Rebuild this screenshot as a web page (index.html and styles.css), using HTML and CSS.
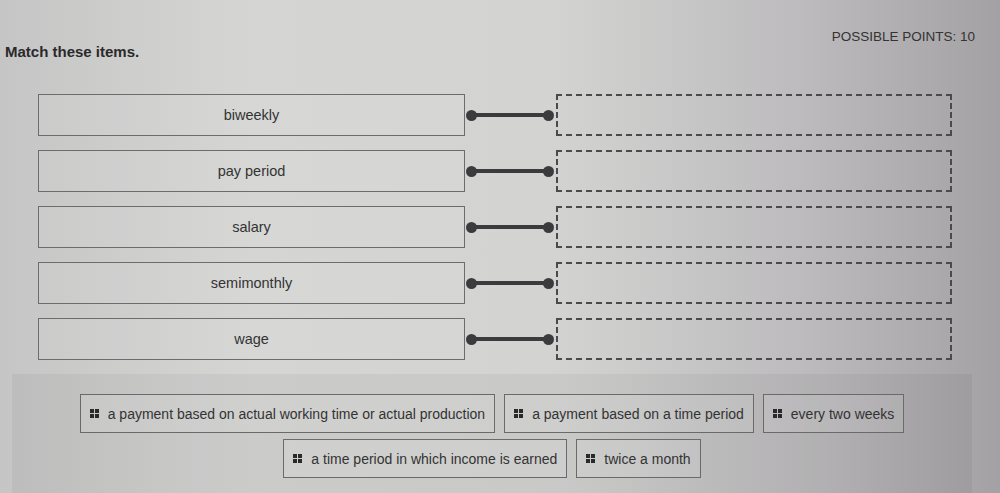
FILE: index.html
```html
<html lang="en">
<head>
  <meta charset="UTF-8">
  <title>Match these items</title>
  <link rel="stylesheet" href="styles.css">
</head>
<body>

  <div class="pergunta">
    <div class="pontos">POSSIBLE POINTS: 10</div>
    <h2 class="titulo">Match these items.</h2>

    <div class="pares">
      <div class="par">
        <div class="termo">biweekly</div>
        <div class="ligacao"><span class="ponto"></span><span class="linha"></span><span class="ponto"></span></div>
        <div class="alvo"></div>
      </div>
      <div class="par">
        <div class="termo">pay period</div>
        <div class="ligacao"><span class="ponto"></span><span class="linha"></span><span class="ponto"></span></div>
        <div class="alvo"></div>
      </div>
      <div class="par">
        <div class="termo">salary</div>
        <div class="ligacao"><span class="ponto"></span><span class="linha"></span><span class="ponto"></span></div>
        <div class="alvo"></div>
      </div>
      <div class="par">
        <div class="termo">semimonthly</div>
        <div class="ligacao"><span class="ponto"></span><span class="linha"></span><span class="ponto"></span></div>
        <div class="alvo"></div>
      </div>
      <div class="par">
        <div class="termo">wage</div>
        <div class="ligacao"><span class="ponto"></span><span class="linha"></span><span class="ponto"></span></div>
        <div class="alvo"></div>
      </div>
    </div>

    <div class="banco">
      <div class="opcao"><span class="alca"><i></i><i></i><i></i><i></i></span>a payment based on actual working time or actual production</div>
      <div class="opcao"><span class="alca"><i></i><i></i><i></i><i></i></span>a payment based on a time period</div>
      <div class="opcao"><span class="alca"><i></i><i></i><i></i><i></i></span>every two weeks</div>
      <div class="opcao"><span class="alca"><i></i><i></i><i></i><i></i></span>a time period in which income is earned</div>
      <div class="opcao"><span class="alca"><i></i><i></i><i></i><i></i></span>twice a month</div>
    </div>
  </div>

</body>
</html>
```

FILE: styles.css
```css
* { box-sizing: border-box; }
body, html {
  margin: 0;
  height: 100%;
  overflow: hidden;
  font-family: "Liberation Sans", Arial, sans-serif;
  color: #2e2e2e;
}

body {
  background: linear-gradient(90deg, #c6c5c5 0%, #d5d6d4 25%, #d3d4d2 55%, #bdbbbd 80%, #a3a1a3 100%);
}

.pergunta {
  height: 100vh;
  display: flex;
  flex-direction: column;
}

.pontos {
  align-self: flex-end;
  margin: 30px 25px 0 0;
  font-size: 13.5px;
  line-height: 14px;
  color: #333;
}

.titulo {
  margin: 0 0 0 5px;
  font-size: 15px;
  line-height: 16px;
  font-weight: bold;
  color: #2a2a2a;
}

.pares {
  display: flex;
  flex-direction: column;
  gap: 14px;
  margin: 34px 0 0 38px;
}

.par {
  display: flex;
  align-items: center;
  height: 42px;
}

.termo {
  width: 427px;
  height: 42px;
  display: flex;
  align-items: center;
  justify-content: center;
  border: 1px solid #6c6c6c;
  background: rgba(255, 255, 255, 0.06);
  font-size: 14.5px;
  color: #333;
}

.ligacao {
  width: 91px;
  display: flex;
  align-items: center;
  padding: 0 2px 0 1px;
}

.ponto {
  width: 11px;
  height: 11px;
  border-radius: 50%;
  background: #3b3b3d;
  flex: none;
}

.linha {
  flex: 1;
  height: 4px;
  margin: 0 -2px;
  background: #3b3b3d;
}

.alvo {
  width: 396px;
  height: 42px;
  border: 2px dashed #4a4a4c;
}

.banco {
  flex: 1;
  margin: 14px 28px 0 12px;
  padding: 20px 20px 0;
  background: rgba(0, 0, 0, 0.045);
  display: flex;
  flex-wrap: wrap;
  justify-content: center;
  align-content: flex-start;
  column-gap: 9px;
  row-gap: 6px;
}

.opcao {
  height: 39px;
  display: flex;
  align-items: center;
  padding: 0 9px;
  border: 1px solid #6a6a6a;
  background: rgba(255, 255, 255, 0.1);
  font-size: 14px;
  color: #333;
}

.alca {
  display: grid;
  grid-template-columns: 4px 4px;
  gap: 1px;
  margin-right: 9px;
}

.alca i {
  width: 4px;
  height: 4px;
  background: #2a2a2a;
}
```
